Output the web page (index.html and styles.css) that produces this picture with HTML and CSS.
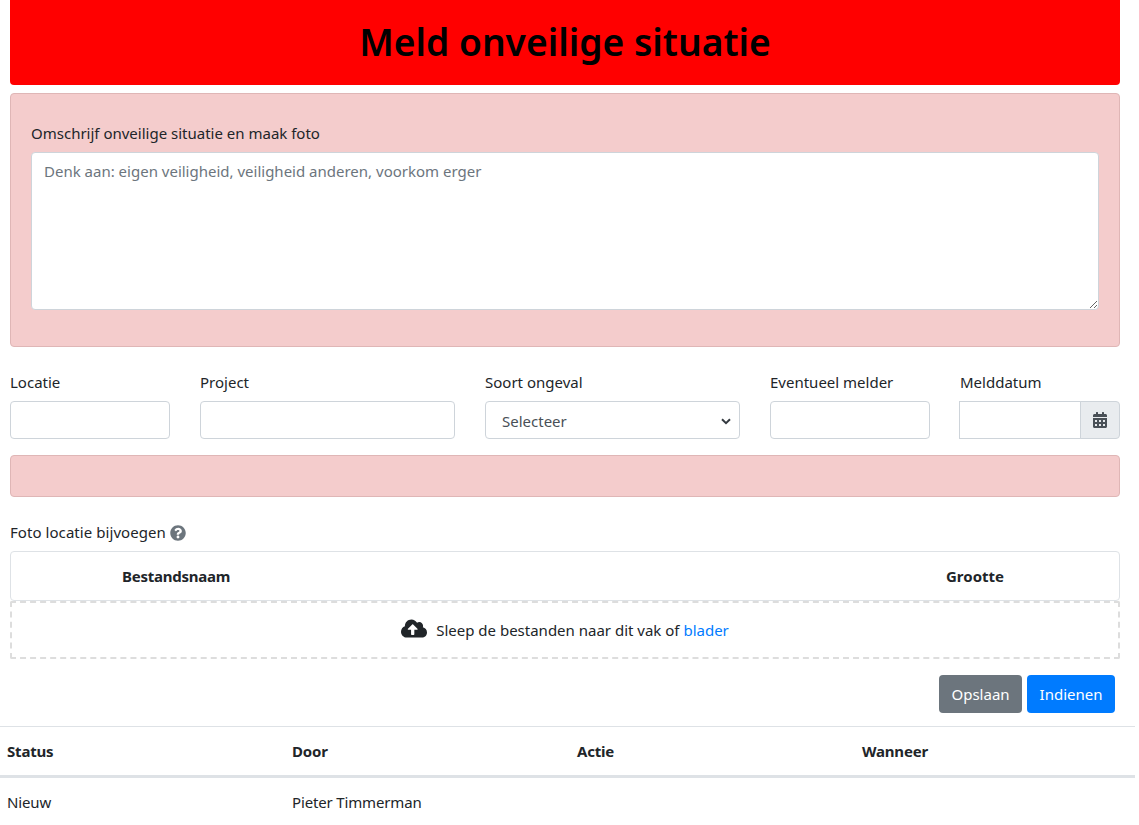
FILE: index.html
```html
<!DOCTYPE html>
<html lang="en">
<head>
    <meta charset="UTF-8">
    <meta name="viewport" content="width=device-width, initial-scale=1.0">
    <title>Meld onveilige situatie</title>
    <link rel="stylesheet" href="styles.css">
</head>
<body>
    <div class="container">
        <div class="page-header">
            <h1>Meld onveilige situatie</h1>
        </div>

        <div class="alert-box description">
            <label class="field-label" for="omschrijving">Omschrijf onveilige situatie en maak foto</label>
            <textarea id="omschrijving" placeholder="Denk aan: eigen veiligheid, veiligheid anderen, voorkom erger"></textarea>
        </div>

        <div class="form-row">
            <div>
                <label class="field-label">Locatie</label>
                <input class="form-control" type="text">
            </div>
            <div>
                <label class="field-label">Project</label>
                <input class="form-control" type="text">
            </div>
            <div>
                <label class="field-label">Soort ongeval</label>
                <div class="select-box">
                    <span>Selecteer</span>
                    <svg width="10" height="7" viewBox="0 0 10 7"><path d="M1 1.2 5 5.2 9 1.2" fill="none" stroke="#343a40" stroke-width="2"/></svg>
                </div>
            </div>
            <div>
                <label class="field-label">Eventueel melder</label>
                <input class="form-control" type="text">
            </div>
            <div>
                <label class="field-label">Melddatum</label>
                <div class="input-group">
                    <input class="form-control" type="text">
                    <span class="input-addon">
                        <svg width="14" height="16" viewBox="0 0 448 512"><path fill="#495057" d="M0 464c0 26.500 21.500 48 48 48h352c26.500 0 48-21.500 48-48V192H0v272zm320-196c0-6.600 5.400-12 12-12h40c6.600 0 12 5.400 12 12v40c0 6.600-5.400 12-12 12h-40c-6.600 0-12-5.400-12-12v-40zm0 128c0-6.600 5.400-12 12-12h40c6.600 0 12 5.400 12 12v40c0 6.600-5.400 12-12 12h-40c-6.600 0-12-5.400-12-12v-40zM192 268c0-6.600 5.400-12 12-12h40c6.600 0 12 5.400 12 12v40c0 6.600-5.400 12-12 12h-40c-6.600 0-12-5.400-12-12v-40zm0 128c0-6.600 5.400-12 12-12h40c6.600 0 12 5.400 12 12v40c0 6.600-5.400 12-12 12h-40c-6.600 0-12-5.400-12-12v-40zM64 268c0-6.600 5.400-12 12-12h40c6.600 0 12 5.400 12 12v40c0 6.600-5.400 12-12 12H76c-6.600 0-12-5.400-12-12v-40zm0 128c0-6.600 5.400-12 12-12h40c6.600 0 12 5.400 12 12v40c0 6.600-5.400 12-12 12H76c-6.600 0-12-5.400-12-12v-40zM400 64h-48V16c0-8.800-7.200-16-16-16h-32c-8.800 0-16 7.200-16 16v48H160V16c0-8.800-7.200-16-16-16h-32c-8.800 0-16 7.200-16 16v48H48C21.500 64 0 85.500 0 112v48h448v-48c0-26.500-21.500-48-48-48z"/></svg>
                    </span>
                </div>
            </div>
        </div>

        <div class="alert-box empty"></div>

        <div class="upload-label">
            <span>Foto locatie bijvoegen</span>
            <svg width="16" height="16" viewBox="0 0 512 512"><path fill="#6c757d" d="M504 256c0 137-111 248-248 248S8 393 8 256 119 8 256 8s248 111 248 248zM262.700 90c-54.500 0-89.300 23-116.500 63.800-3.500 5.300-2.300 12.400 2.800 16.300l34.700 26.300c5.200 3.900 12.600 3 16.700-2.100 17.900-22.700 30.100-35.800 57.300-35.800 20.400 0 45.700 13.100 45.700 32.900 0 15-12.400 22.700-32.600 34-23.600 13.200-54.800 29.700-54.800 70.900V300c0 6.600 5.400 12 12 12h56c6.600 0 12-5.400 12-12v-1.300c0-28.600 83.500-29.800 83.500-107.200C380 133.300 319.600 90 262.700 90zM256 338c-25.500 0-46.200 20.700-46.200 46.200 0 25.500 20.700 46.200 46.200 46.200s46.200-20.700 46.200-46.200c0-25.500-20.700-46.200-46.200-46.200z"/></svg>
        </div>

        <div class="file-head">
            <span class="file-name">Bestandsnaam</span>
            <span class="file-size">Grootte</span>
        </div>
        <div class="dropzone">
            <svg class="cloud" width="26" height="21" viewBox="0 0 640 512"><path fill="#212529" d="M537.600 226.600c4.100-10.700 6.400-22.400 6.400-34.600 0-53-43-96-96-96-19.700 0-38.100 6-53.300 16.200C367 64.200 315.300 32 256 32c-88.400 0-160 71.600-160 160 0 2.700.1 5.400.2 8.100C40.200 219.800 0 273.200 0 336c0 79.500 64.500 144 144 144h368c70.700 0 128-57.300 128-128 0-61.900-44-113.600-102.400-125.400zM393.400 288H328v112c0 8.800-7.200 16-16 16h-48c-8.800 0-16-7.200-16-16V288h-65.400c-14.300 0-21.400-17.200-11.300-27.300l105.400-105.400c6.200-6.200 16.400-6.200 22.600 0l105.400 105.400c10.100 10.100 2.900 27.300-11.300 27.300z"/></svg>
            <span>Sleep de bestanden naar dit vak of <a href="#">blader</a></span>
        </div>

        <div class="actions">
            <button class="btn btn-grey" type="button">Opslaan</button>
            <button class="btn btn-blue" type="button">Indienen</button>
        </div>
    </div>

    <table class="history">
        <thead>
            <tr>
                <th>Status</th>
                <th>Door</th>
                <th>Actie</th>
                <th>Wanneer</th>
            </tr>
        </thead>
        <tbody>
            <tr>
                <td>Nieuw</td>
                <td>Pieter Timmerman</td>
                <td></td>
                <td></td>
            </tr>
        </tbody>
    </table>
</body>
</html>
```
FILE: styles.css
```css
* {
    box-sizing: border-box;
}

html, body {
    height: 825px;
    overflow: hidden;
}

body {
    margin: 0;
    width: 1135px;
    font-family: "Noto Sans", Arial, sans-serif;
    font-size: 15px;
    line-height: 24px;
    color: #212529;
    background: white;
}

.container {
    padding: 0 15px 0 10px;
}

.page-header {
    height: 85px;
    background: #ff0000;
    border-radius: 0 0 4px 4px;
    text-align: center;
    padding-top: 18px;
}

.page-header h1 {
    margin: 0;
    font-size: 37.2px;
    line-height: 48px;
    font-weight: 600;
    color: #000;
}

.alert-box {
    background: #f4cccc;
    border: 1px solid #dfb6b6;
    border-radius: 4px;
}

.description {
    margin-top: 8px;
    height: 254px;
    padding: 28px 20px 0;
}

.field-label {
    display: block;
    height: 24px;
    margin-bottom: 6px;
    line-height: 22px;
}

textarea {
    display: block;
    width: 100%;
    height: 158px;
    padding: 6px 12px;
    border: 1px solid #ced4da;
    border-radius: 4px;
    background: white;
    font: inherit;
    resize: vertical;
}

textarea::placeholder {
    color: #6c757d;
    opacity: 1;
}

.form-row {
    display: grid;
    grid-template-columns: 160px 255px 255px 160px 160px;
    gap: 30px;
    margin-top: 24px;
}

.form-control {
    display: block;
    width: 100%;
    height: 38px;
    border: 1px solid #ced4da;
    border-radius: 4px;
    background: white;
}

.select-box {
    display: flex;
    align-items: center;
    justify-content: space-between;
    height: 38px;
    padding: 2px 8px 0 16px;
    border: 1px solid #ced4da;
    border-radius: 4px;
    color: #495057;
}

.input-group {
    display: flex;
    margin-left: -1px;
}

.input-group .form-control {
    flex: 1;
    min-width: 0;
    border-radius: 0;
}

.input-addon {
    display: flex;
    align-items: center;
    justify-content: center;
    width: 40px;
    height: 38px;
    margin-left: -1px;
    background: #e9ecef;
    border: 1px solid #ced4da;
    border-radius: 0 4px 4px 0;
}

.empty {
    height: 42px;
    margin-top: 16px;
}

.upload-label {
    display: flex;
    align-items: center;
    gap: 4px;
    height: 24px;
    margin-top: 24px;
}

.upload-label span {
    margin-top: -2px;
    letter-spacing: 0.06px;
}

.file-head {
    display: flex;
    align-items: center;
    height: 50px;
    margin-top: 6px;
    border: 1px solid #dee2e6;
    border-radius: 4px;
    font-weight: 700;
}

.file-name {
    margin-left: 111px;
    letter-spacing: -0.25px;
}

.file-size {
    margin-left: auto;
    margin-right: 115px;
}

.dropzone {
    display: flex;
    align-items: center;
    justify-content: center;
    gap: 9px;
    height: 58px;
    border: 2px dashed #dddddd;
    border-radius: 2px;
}

.cloud {
    margin-top: -4px;
}

.dropzone a {
    color: #007bff;
    text-decoration: none;
}

.actions {
    display: flex;
    justify-content: flex-end;
    gap: 5px;
    margin-top: 16px;
    padding-right: 5px;
}

.btn {
    height: 38px;
    padding: 0 11.5px;
    border: 1px solid transparent;
    border-radius: 4px;
    font: inherit;
    color: white;
    cursor: pointer;
}

.btn-grey {
    background: #6c757d;
}

.btn-blue {
    background: #007bff;
}

.history {
    width: 1140px;
    margin-top: 13px;
    border-collapse: collapse;
    table-layout: fixed;
}

.history th, .history td {
    padding: 12px 7px;
    text-align: left;
    border-top: 1px solid #dee2e6;
}

.history th {
    height: 50px;
    font-weight: 700;
    letter-spacing: -0.2px;
    border-bottom: 3px solid #dee2e6;
}

.history td {
    letter-spacing: -0.15px;
}
```
